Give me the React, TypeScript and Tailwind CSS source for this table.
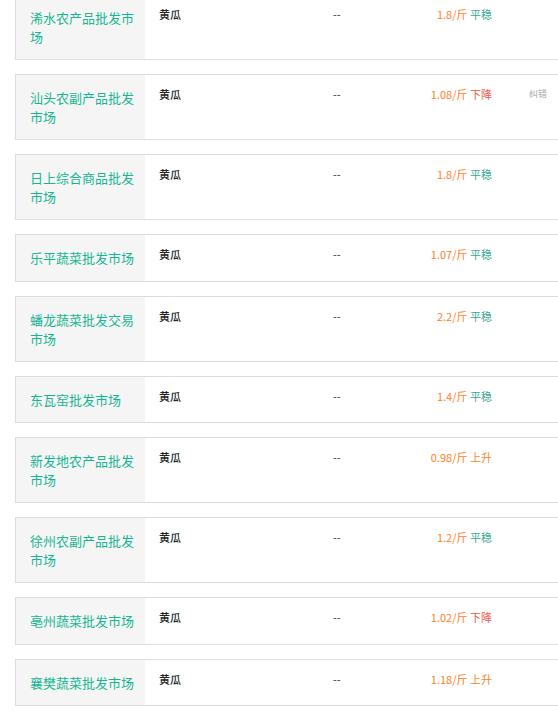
import React from 'react';

const rows = [
  { name: '浠水农产品批发市场', price: '1.8', trend: '平稳' },
  { name: '汕头农副产品批发市场', price: '1.08', trend: '下降', fix: true },
  { name: '日上综合商品批发市场', price: '1.8', trend: '平稳' },
  { name: '乐平蔬菜批发市场', price: '1.07', trend: '平稳' },
  { name: '蟠龙蔬菜批发交易市场', price: '2.2', trend: '平稳' },
  { name: '东瓦窑批发市场', price: '1.4', trend: '平稳' },
  { name: '新发地农产品批发市场', price: '0.98', trend: '上升' },
  { name: '徐州农副产品批发市场', price: '1.2', trend: '平稳' },
  { name: '亳州蔬菜批发市场', price: '1.02', trend: '下降' },
  { name: '襄樊蔬菜批发市场', price: '1.18', trend: '上升' },
];

const trendColor: Record<string, string> = {
  平稳: 'text-[#3aa991]',
  下降: 'text-[#ee5a48]',
  上升: 'text-[#f5872e]',
};

const App = () => {
  return (
    <div
      className="w-[558px] h-[716px] overflow-hidden bg-white"
      style={{ fontFamily: '"Noto Sans CJK SC", "Noto Sans", sans-serif' }}
    >
      <div className="-mt-[6px] pl-[15px] flex flex-col gap-[14px]">
        {rows.map((row) => (
          <div key={row.name} className="flex w-[580px] border border-[#dddddd] bg-white">
            {/* market name */}
            <div className="w-[129px] min-h-[45.6px] shrink-0 bg-[#f5f5f5] pl-[14px] pr-[8px] py-[13px] text-[13px] leading-[19px] text-[#17b593]">
              {row.name}
            </div>
            {/* product */}
            <div className="w-[175px] shrink-0 pl-[14px] pt-[13px] text-[11px] leading-[12px] font-medium text-[#222]">
              黄瓜
            </div>
            <div className="w-[100px] shrink-0 pl-[13px] pt-[13px] text-[11px] leading-[12px] text-[#333]">
              --
            </div>
            <div className="w-[72px] shrink-0 pt-[13px] text-right text-[11px] leading-[12px] whitespace-nowrap">
              <span className="text-[#ff7f1f]">{row.price}/斤</span>{' '}
              <span className={trendColor[row.trend]}>{row.trend}</span>
            </div>
            <div className="pl-[37px] pt-[13px] text-[9px] leading-[12px] text-[#aaaaaa]">
              {row.fix ? '纠错' : ''}
            </div>
          </div>
        ))}
      </div>
    </div>
  );
};

export default App;
